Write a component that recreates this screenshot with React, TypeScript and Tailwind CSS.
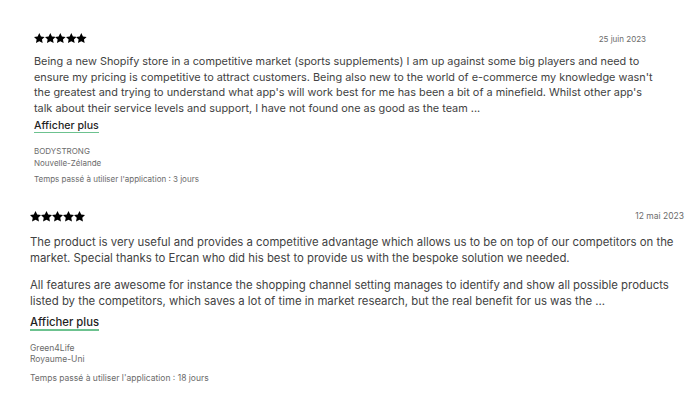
import React from "react";

function Stars({ size }: { size: number }) {
  return (
    <div className="flex">
      {[0, 1, 2, 3, 4].map((i) => (
        <svg key={i} width={size} height={size} viewBox="0 0 20 20">
          <path
            d="M10 0.2l3.1 6.3 6.9.9-5 4.7 1.3 6.9L10 15.7 3.7 19l1.3-6.9-5-4.7 6.9-.9z"
            fill="#000"
          />
        </svg>
      ))}
    </div>
  );
}

export default function App() {
  return (
    <div
      className="w-[700px] h-[400px] bg-white overflow-hidden"
      style={{ fontFamily: "Inter, 'Noto Sans', sans-serif" }}
    >
      {/* Review 1 */}
      <div className="pt-[32px] pl-[34px] w-[646px]">
        <div className="flex items-center justify-between h-[13px]">
          <Stars size={10.6} />
          <span className="text-[8px] text-[#6b6b6b]">25 juin 2023</span>
        </div>
        <p className="mt-[9px] text-[10.88px] leading-[15.5px] text-[#424242] whitespace-nowrap">
          Being a new Shopify store in a competitive market (sports supplements) I am up against some big players and need to
          <br />
          ensure my pricing is competitive to attract customers. Being also new to the world of e-commerce my knowledge wasn't
          <br />
          the greatest and trying to understand what app's will work best for me has been a bit of a minefield. Whilst other app's
          <br />
          talk about their service levels and support, I have not found one as good as the team ...
        </p>
        <div className="mt-[3px] flex">
          <span className="text-[10.6px] font-medium leading-[13px] text-[#1f1f1f] border-b border-[#6cc28f]">
            Afficher plus
          </span>
        </div>
        <div className="mt-[11.5px] text-[8px] leading-[12.6px] text-[#6b6b6b]">
          <div>BODYSTRONG</div>
          <div>Nouvelle-Zélande</div>
          <div className="mt-[3.5px]">Temps passé à utiliser l'application : 3 jours</div>
        </div>
      </div>

      {/* Review 2 */}
      <div className="pt-[23.5px] pl-[30px] w-[684px]">
        <div className="flex items-center justify-between h-[14px]">
          <Stars size={11} />
          <span className="text-[8.5px] text-[#6b6b6b]">12 mai 2023</span>
        </div>
        <p className="mt-[11.5px] text-[11.37px] leading-[15.8px] text-[#424242] whitespace-nowrap">
          The product is very useful and provides a competitive advantage which allows us to be on top of our competitors on the
          <br />
          market. Special thanks to Ercan who did his best to provide us with the bespoke solution we needed.
        </p>
        <p className="mt-[11.7px] text-[11.37px] leading-[15.8px] text-[#424242] whitespace-nowrap">
          All features are awesome for instance the shopping channel setting manages to identify and show all possible products
          <br />
          listed by the competitors, which saves a lot of time in market research, but the real benefit for us was the ...
        </p>
        <div className="mt-[5.5px] flex">
          <span className="text-[11.3px] font-medium leading-[14px] text-[#1f1f1f] border-b-2 border-[#6cc28f]">
            Afficher plus
          </span>
        </div>
        <div className="mt-[11.5px] text-[8.5px] leading-[11.8px] text-[#6b6b6b]">
          <div>Green4Life</div>
          <div>Royaume-Uni</div>
          <div className="mt-[6.5px]">Temps passé à utiliser l'application : 18 jours</div>
        </div>
      </div>
    </div>
  );
}
